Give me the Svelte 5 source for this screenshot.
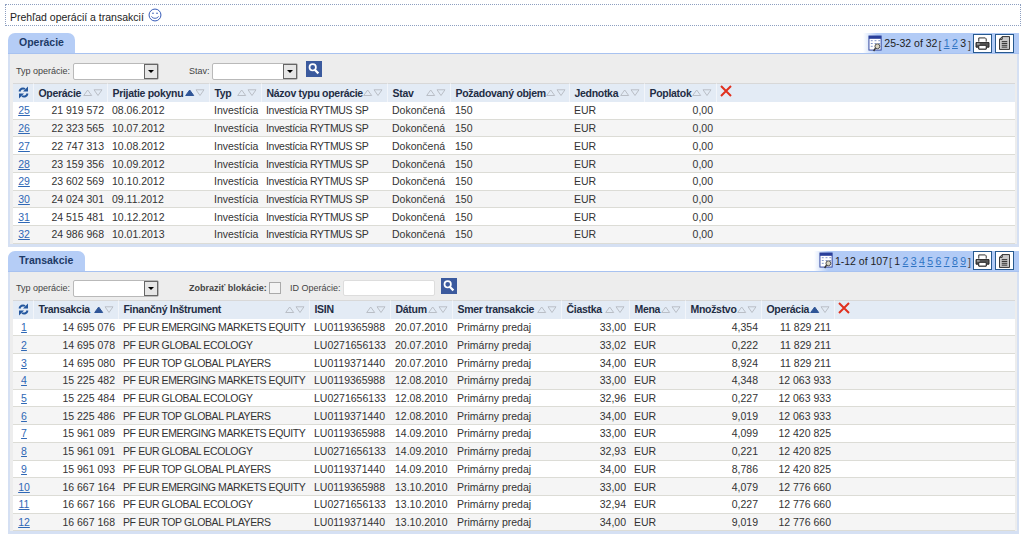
<script>
    const opCols = [
        { w: 74, label: 'Operácie', sort: '' },
        { w: 102, label: 'Prijatie pokynu', sort: 'up' },
        { w: 52, label: 'Typ', sort: '' },
        { w: 126, label: 'Názov typu operácie', sort: '' },
        { w: 63, label: 'Stav', sort: '' },
        { w: 119, label: 'Požadovaný objem', sort: '' },
        { w: 75, label: 'Jednotka', sort: '' },
        { w: 72, label: 'Poplatok', sort: '' }
    ];
    // r = right aligned, t / f = capitals text that runs narrow
    const opAlign = ['r', '', '', 't', '', '', '', 'r'];

    const opData = [
        ['25', '21 919 572', '08.06.2012'],
        ['26', '22 323 565', '10.07.2012'],
        ['27', '22 747 313', '10.08.2012'],
        ['28', '23 159 356', '10.09.2012'],
        ['29', '23 602 569', '10.10.2012'],
        ['30', '24 024 301', '09.11.2012'],
        ['31', '24 515 481', '10.12.2012'],
        ['32', '24 986 968', '10.01.2013']
    ];
    const opRows = opData.map(([id, op, date]) => [
        id, op, date, 'Investícia', 'Investícia RYTMUS SP', 'Dokončená', '150', 'EUR', '0,00'
    ]);

    const trCols = [
        { w: 85, label: 'Transakcia', sort: 'up' },
        { w: 191, label: 'Finančný Inštrument', sort: '' },
        { w: 81, label: 'ISIN', sort: '' },
        { w: 62, label: 'Dátum', sort: '' },
        { w: 109, label: 'Smer transakcie', sort: '' },
        { w: 68, label: 'Čiastka', sort: '' },
        { w: 56, label: 'Mena', sort: '' },
        { w: 76, label: 'Množstvo', sort: '' },
        { w: 73, label: 'Operácia', sort: 'up' }
    ];
    const trAlign = ['r', 'f', '', '', '', 'r', '', 'r', 'r'];

    const EM = ['PF EUR EMERGING MARKETS EQUITY', 'LU0119365988'];
    const GE = ['PF EUR GLOBAL ECOLOGY', 'LU0271656133'];
    const TG = ['PF EUR TOP GLOBAL PLAYERS', 'LU0119371440'];

    const trData = [
        ['14 695 076', EM, '20.07.2010', '33,00', '4,354', '11 829 211'],
        ['14 695 078', GE, '20.07.2010', '33,02', '0,222', '11 829 211'],
        ['14 695 080', TG, '20.07.2010', '34,00', '8,924', '11 829 211'],
        ['15 225 482', EM, '12.08.2010', '33,00', '4,348', '12 063 933'],
        ['15 225 484', GE, '12.08.2010', '32,96', '0,227', '12 063 933'],
        ['15 225 486', TG, '12.08.2010', '34,00', '9,019', '12 063 933'],
        ['15 961 089', EM, '14.09.2010', '33,00', '4,099', '12 420 825'],
        ['15 961 091', GE, '14.09.2010', '32,93', '0,221', '12 420 825'],
        ['15 961 093', TG, '14.09.2010', '34,00', '8,786', '12 420 825'],
        ['16 667 164', EM, '13.10.2010', '33,00', '4,079', '12 776 660'],
        ['16 667 166', GE, '13.10.2010', '32,94', '0,227', '12 776 660'],
        ['16 667 168', TG, '13.10.2010', '34,00', '9,019', '12 776 660']
    ];
    const trRows = trData.map(([t, fund, date, amount, qty, op], i) => [
        String(i + 1), t, fund[0], fund[1], date, 'Primárny predaj', amount, 'EUR', qty, op
    ]);
</script>

{#snippet pager(range, pages, current)}
    <div class="pager">
        <svg class="cal" viewBox="0 0 16 18" width="15" height="17">
            <rect x="1" y="1" width="13" height="15" fill="#fff" stroke="#2a3f9a" />
            <rect x="1" y="1" width="13" height="3" fill="#2a3f9a" />
            <path d="M3 6h2M7 6h2M11 6h2M3 9h2M7 9h2M11 9h2M3 12h2" stroke="#7b8fc4" />
            <circle cx="10" cy="12" r="2.6" fill="#d9d4c0" stroke="#444" />
            <path d="M8 14l-2 3" stroke="#333" stroke-width="1.5" />
        </svg>
        <span class="range">{range}</span>
        <span class="brk">[</span>
        {#each pages as p}
            {#if p === current}
                <span class="pg cur">{p}</span>
            {:else}
                <span class="pg">{p}</span>
            {/if}
        {/each}
        <span class="brk last">]</span>
        <span class="tool first">
            <svg viewBox="0 0 16 14" width="15" height="13">
                <path d="M4 5V1h7l1 1v3" fill="#fff" stroke="#222" />
                <path d="M1 6h14v5h-3v2H4v-2H1z" fill="#555" stroke="#222" />
                <path d="M4 9h8v4H4z" fill="#fff" stroke="#222" />
                <path d="M2 7.5h3" stroke="#ddd" />
            </svg>
        </span>
        <span class="tool">
            <svg viewBox="0 0 12 15" width="11" height="14">
                <path d="M3.5 .5h8v14H.5V3.5z" fill="#c9c9c9" stroke="#222" />
                <path d="M3.5 .5v3h-3" fill="none" stroke="#222" />
                <path d="M3 6h6M3 8h6M3 10h6M3 12h6" stroke="#222" />
            </svg>
        </span>
    </div>
{/snippet}

{#snippet sortMark(dir)}
    <svg class="arrows" viewBox="0 0 20 7" width="20" height="7">
        <path d="M.7 6.5L4.7 1 8.7 6.5z" fill={dir === 'up' ? '#2f5597' : 'none'} stroke={dir === 'up' ? '#2f5597' : '#b9bec6'} />
        <path d="M11 .8h8L15 6.5z" fill="none" stroke="#b9bec6" />
    </svg>
{/snippet}

{#snippet dropdown()}
    <span class="select"><span class="drop"></span></span>
{/snippet}

{#snippet searchBtn()}
    <span class="search">
        <svg viewBox="0 0 16 16" width="16" height="16">
            <circle cx="6.7" cy="6.3" r="3.2" fill="none" stroke="#fff" stroke-width="1.7" />
            <path d="M9 9l3.4 3.4" stroke="#fff" stroke-width="2.2" />
        </svg>
    </span>
{/snippet}

{#snippet grid(cols, rows, align)}
    <table class="grid">
        <colgroup>
            <col style="width: 21px" />
            {#each cols as c}
                <col style="width: {c.w}px" />
            {/each}
            <col />
        </colgroup>
        <thead>
            <tr>
                <th class="refresh">
                    <svg viewBox="0 0 11 13" width="11" height="13">
                        <path d="M1.5 5.5A3.6 3.6 0 0 1 7 3" fill="none" stroke="#24579e" stroke-width="2" />
                        <path d="M10 .5v5H5z" fill="#24579e" />
                        <path d="M9.5 7.5A3.6 3.6 0 0 1 4 10" fill="none" stroke="#24579e" stroke-width="2" />
                        <path d="M1 12.5v-5h5z" fill="#24579e" />
                    </svg>
                </th>
                {#each cols as c}
                    <th>
                        <span class="th-in">
                            <span class="th-label">{c.label}</span>
                            {@render sortMark(c.sort)}
                        </span>
                    </th>
                {/each}
                <th class="clear">
                    <svg viewBox="0 0 12 12" width="12" height="12">
                        <path d="M1 1l10 10M11 1L1 11" stroke="#e0301e" stroke-width="2" />
                    </svg>
                </th>
            </tr>
        </thead>
        <tbody>
            {#each rows as row}
                <tr>
                    <td class="idx"><span class="link">{row[0]}</span></td>
                    {#each row.slice(1) as val, i}
                        <td class:r={align[i] === 'r'} class:t={align[i] === 't'} class:f={align[i] === 'f'}>{val}</td>
                    {/each}
                    <td></td>
                </tr>
            {/each}
        </tbody>
    </table>
{/snippet}

<div class="page">
    <div class="title">
        <span>Prehľad operácií a transakcií</span>
        <svg viewBox="0 0 16 16" width="14" height="14">
            <circle cx="8" cy="8" r="6.8" fill="#fff" stroke="#2f55b5" stroke-width="1.1" />
            <circle cx="5.7" cy="6" r="0.9" fill="#2f55b5" />
            <circle cx="10.3" cy="6" r="0.9" fill="#2f55b5" />
            <path d="M4 9.5c1 3 7 3 8 0" fill="none" stroke="#2f55b5" />
        </svg>
    </div>

    <section class="panel first-panel">
        <header class="panel-head">
            <span class="tab t1">Operácie</span>
            {@render pager('25-32 of 32', [1, 2, 3], 3)}
        </header>
        <div class="panel-body">
            <div class="filters">
                <span class="lbl l1">Typ operácie:</span>
                {@render dropdown()}
                <span class="lbl l2">Stav:</span>
                {@render dropdown()}
                <span class="gap-s"></span>
                {@render searchBtn()}
            </div>
            {@render grid(opCols, opRows, opAlign)}
        </div>
    </section>

    <section class="panel">
        <header class="panel-head">
            <span class="tab t2">Transakcie</span>
            {@render pager('1-12 of 107', [1, 2, 3, 4, 5, 6, 7, 8, 9], 1)}
        </header>
        <div class="panel-body">
            <div class="filters compact">
                <span class="lbl l1">Typ operácie:</span>
                {@render dropdown()}
                <span class="lbl l3">Zobraziť blokácie:</span>
                <span class="check"></span>
                <span class="lbl l4">ID Operácie:</span>
                <span class="text-in"></span>
                {@render searchBtn()}
            </div>
            {@render grid(trCols, trRows, trAlign)}
        </div>
    </section>
</div>

<style>
    :global(body) {
        background: #fff;
        font-family: "Liberation Sans", Arial, sans-serif;
        font-size: 10.5px;
        color: #333;
    }

    .page {
        width: 1024px;
        height: 536px;
        overflow: hidden;
        padding: 4px 3px 0 5px;
        box-sizing: border-box;
    }

    .title {
        height: 22px;
        box-sizing: border-box;
        border: 1px dotted #8d9fc0;
        display: flex;
        align-items: center;
        gap: 4px;
        padding: 4px 0 0 4px;
        color: #222;
    }

    .title svg {
        margin-top: -5px;
    }

    .panel {
        margin: 4px 0 0 3px;
        width: 1011px;
    }

    .first-panel {
        margin-top: 7px;
    }

    .panel-head {
        height: 20px;
        display: flex;
        justify-content: space-between;
        border-bottom: 1px solid #a8c2f0;
    }

    .tab {
        height: 20px;
        box-sizing: border-box;
        background: #b5cdf6;
        border-radius: 7px 7px 0 0;
        color: #1d3a66;
        font-weight: bold;
        padding: 3px 0 0 11px;
    }

    .t1 {
        width: 67px;
    }

    .t2 {
        width: 77px;
    }

    .pager {
        height: 20px;
        display: flex;
        align-items: center;
        padding: 0 5px 0 5px;
        background: linear-gradient(90deg, rgba(178, 203, 246, 0), #b2cbf6 14px);
        color: #222;
    }

    .cal {
        margin-right: 1px;
    }

    .range {
        margin-right: 1px;
    }

    .brk {
        color: #444;
        margin-top: 3px;
    }

    .brk.last {
        margin-left: 2px;
    }

    .pg {
        color: #2f74c4;
        text-decoration: underline;
        margin-left: 2.4px;
    }

    .pg.cur {
        color: #222;
        text-decoration: none;
    }

    .tool {
        width: 19px;
        height: 19px;
        box-sizing: border-box;
        background: #fff;
        border: 1px solid #27598f;
        display: flex;
        align-items: center;
        justify-content: center;
        margin-left: 3px;
    }

    .tool.first {
        margin-left: 2px;
    }

    .panel-body {
        background: #ededed;
        border: solid #d5e0f3;
        border-width: 0 2px 3px 2px;
        padding: 0 3px;
    }

    .filters {
        height: 29px;
        box-sizing: border-box;
        padding: 5px 0 0 3px;
        display: flex;
        align-items: center;
    }

    .filters.compact {
        height: 28px;
    }

    .lbl {
        font-size: 9px;
        color: #444;
        white-space: nowrap;
    }

    .l1 {
        width: 57px;
    }

    .l2 {
        margin-left: 30px;
        width: 23px;
    }

    .l3 {
        margin-left: 30px;
        font-weight: bold;
        width: 80px;
    }

    .l4 {
        margin-left: 9px;
        width: 53px;
    }

    .select {
        width: 86px;
        height: 17px;
        box-sizing: border-box;
        background: #fff;
        border: 1px solid #b9b9b9;
        border-radius: 2px;
        position: relative;
        display: block;
    }

    .drop {
        position: absolute;
        right: 0;
        top: 0;
        width: 14px;
        height: 15px;
        box-sizing: border-box;
        background: #e6e6e6;
        border: 1px solid #666;
    }

    .drop::after {
        content: '';
        position: absolute;
        left: 3px;
        top: 5px;
        border: solid transparent;
        border-width: 3px 3px 0;
        border-top-color: #000;
    }

    .gap-s {
        width: 8px;
    }

    .search {
        width: 16px;
        height: 16px;
        background: #3b5a9e;
        display: block;
        margin-top: -4px;
    }

    .check {
        width: 12px;
        height: 12px;
        box-sizing: border-box;
        background: #f4f4f4;
        border: 1px solid #aaa;
    }

    .text-in {
        width: 92px;
        height: 16px;
        background: #fff;
        box-sizing: border-box;
        border: 1px solid #ddd;
        border-radius: 2px;
        margin-right: 6px;
    }

    .grid {
        width: 1002px;
        table-layout: fixed;
        border-collapse: separate;
        border-spacing: 0;
        font-size: 10.5px;
        color: #333;
    }

    .grid th {
        height: 19px;
        box-sizing: border-box;
        padding: 0 4px 1px 4.5px;
        background: #e3ebf5;
        border-top: 1px solid #d8d8d8;
        border-right: 1px solid #f2f5fa;
        font-weight: bold;
        letter-spacing: -0.3px;
        text-align: left;
        color: #1f2d44;
        white-space: nowrap;
        overflow: hidden;
    }

    .th-in {
        display: flex;
        align-items: center;
        justify-content: space-between;
        height: 13px;
    }

    .arrows {
        flex: none;
        margin-right: 0;
    }

    .grid th.refresh {
        padding: 0 0 1px 5px;
        line-height: 0;
    }

    .grid th.clear {
        padding: 0 0 4px 3px;
        border-right: 0;
    }

    .clear svg {
        display: block;
    }

    .grid td {
        height: 17.73px;
        box-sizing: border-box;
        padding: 0 4px;
        background: #fff;
        border-bottom: 1px solid #dcdcd6;
        white-space: nowrap;
        overflow: hidden;
    }

    .grid tbody tr:nth-child(even) td {
        background: #f5f5f5;
    }

    .grid td.r {
        text-align: right;
    }

    .grid td.t {
        letter-spacing: -0.3px;
    }

    .grid td.f {
        letter-spacing: -0.4px;
    }

    .grid td.idx {
        padding: 0 0 0 1px;
        text-align: center;
    }

    .link {
        color: #2f68b5;
        text-decoration: underline;
    }
</style>
